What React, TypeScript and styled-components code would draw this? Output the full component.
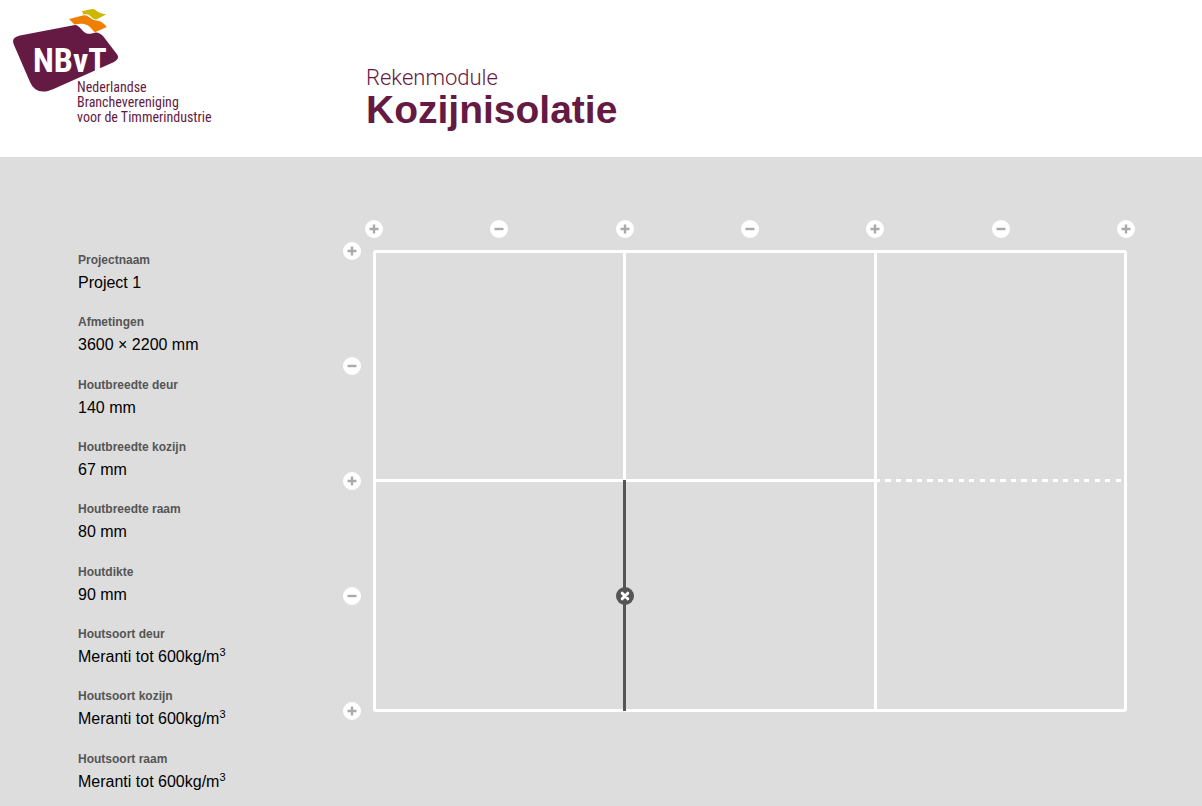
import React from "react";
import styled, { createGlobalStyle } from "styled-components";

const colors = {
  brand: "#651a43",
  surface: "#dddddd",
  line: "#ffffff",
  dark: "#555555",
  sign: "#aaaaaa",
};

const GlobalStyle = createGlobalStyle`
  * { box-sizing: border-box; }
  body {
    margin: 0;
    background: ${colors.surface};
    color: #000;
    font-family: "Liberation Sans", Arial, sans-serif;
  }
`;

const Header = styled.header`
  display: grid;
  grid-template-columns: 354px 1fr;
  height: 157px;
  padding: 8px 12px;
  background: #fff;
  color: ${colors.brand};
`;

const LogoLink = styled.a`
  display: block;
  width: 200px;
  color: inherit;
`;

const Title = styled.h1`
  display: flex;
  flex-direction: column;
  margin: 0;
  padding-top: 58px;
  font-size: 39px;
  line-height: 40px;
  font-weight: 700;
`;

const Overline = styled.span`
  font-family: Roboto, "Liberation Sans", sans-serif;
  font-size: 22px;
  line-height: 24px;
  font-weight: 300;
`;

const Main = styled.main`
  display: grid;
  grid-template-columns: 265px 1fr;
  padding: 63px 67px 0 78px;
`;

const Specs = styled.dl`
  display: grid;
  grid-auto-rows: 1fr;
  align-self: start;
  min-height: 561px;
  margin: 32px 0 0;
`;

const Term = styled.dt`
  color: ${colors.dark};
  font-size: 12px;
  line-height: 16px;
  font-weight: 700;
`;

const Value = styled.dd`
  margin: 5px 0 0;
  font-size: 16px;
  line-height: 20px;
`;

const Power = styled.sup`
  font-size: 11px;
  line-height: 0;
`;

const Editor = styled.section`
  display: grid;
  grid-template-columns: 18px 1fr;
  grid-template-rows: 18px auto;
  gap: 4px;
  align-self: start;
`;

const Handles = styled.div<{ $vertical?: boolean }>`
  display: flex;
  flex-direction: ${(p) => (p.$vertical ? "column" : "row")};
  justify-content: space-between;
  grid-column: ${(p) => (p.$vertical ? 1 : 2)};
  grid-row: ${(p) => (p.$vertical ? 2 : 1)};
`;

const RoundButton = styled.button<{ $dark?: boolean }>`
  display: block;
  flex: none;
  width: 18px;
  height: 18px;
  padding: 0;
  border: 0;
  border-radius: 50%;
  background: ${(p) => (p.$dark ? colors.dark : colors.line)};
  color: ${(p) => (p.$dark ? colors.line : colors.sign)};
  cursor: pointer;

  svg { display: block; }
`;

const Frame = styled.div`
  display: grid;
  grid-column: 2;
  grid-row: 2;
  grid-template-columns: 1fr 3px 1fr 3px 1fr;
  grid-template-rows: 1fr 3px 1fr;
  margin: 8px;
  aspect-ratio: 80 / 49;
  border: 3px solid ${colors.line};
  border-radius: 3px;
`;

const Bar = styled.div<{ $column: string; $row: string }>`
  grid-column: ${(p) => p.$column};
  grid-row: ${(p) => p.$row};
  background: ${colors.line};
`;

const DashedBar = styled(Bar)`
  margin: 0 -2px;
  background: repeating-linear-gradient(
    to right,
    ${colors.line} 0 calc(100% / 48),
    transparent calc(100% / 48) calc(100% / 24)
  );
`;

const ActiveBar = styled(Bar)`
  display: grid;
  place-content: center;
  margin: 1px 0 -2px;
  background: ${colors.dark};
`;

const specs = [
  ["Projectnaam", "Project 1"],
  ["Afmetingen", "3600 × 2200 mm"],
  ["Houtbreedte deur", "140 mm"],
  ["Houtbreedte kozijn", "67 mm"],
  ["Houtbreedte raam", "80 mm"],
  ["Houtdikte", "90 mm"],
  ["Houtsoort deur", "Meranti tot 600kg/m", "3"],
  ["Houtsoort kozijn", "Meranti tot 600kg/m", "3"],
  ["Houtsoort raam", "Meranti tot 600kg/m", "3"],
];

const signPaths = {
  plus: "M4.5 9h9M9 4.5v9",
  minus: "M4.5 9h9",
  cross: "M6.200 6.200l5.600 5.600M11.800 6.200l-5.600 5.600",
};

function Sign({ kind }: { kind: keyof typeof signPaths }) {
  return (
    <svg width="18" height="18" viewBox="0 0 18 18" aria-hidden="true">
      <path
        d={signPaths[kind]}
        stroke="currentColor"
        strokeWidth={kind === "cross" ? 3 : 2.4}
        strokeLinecap={kind === "cross" ? "round" : "butt"}
        fill="none"
      />
    </svg>
  );
}

function HandleList({ count, vertical }: { count: number; vertical?: boolean }) {
  const part = vertical ? "rij" : "kolom";
  return (
    <Handles $vertical={vertical}>
      {Array.from({ length: count }, (_, i) => {
        const add = i % 2 === 0;
        return (
          <RoundButton key={i} type="button" aria-label={`${part} ${add ? "toevoegen" : "verwijderen"}`}>
            <Sign kind={add ? "plus" : "minus"} />
          </RoundButton>
        );
      })}
    </Handles>
  );
}

function Logo() {
  return (
    <svg width="200" height="120" viewBox="12 8 200 120" fill={colors.brand}>
      <path d="M75 25L20 35.500Q10.500 37.500 14 45L30 82Q35 94 48 91Q53 89.500 58 87L114 62Q121 58 116 53L103 36Q99 32 95.500 32.500C92 33.500 88 35 84 32C80 28 79 25.500 75 25Z" />
      <path fill="#ee7f00" d="M69 19L83 15.500C88 14.500 90 19 94 20C97 21 101 19.500 106.800 27L95 32.300C92 30 91 27 87 25C83 23 79 23.500 74.500 24.500Z" />
      <path fill="#cdb700" d="M81.500 11.200L92 9C96 8.500 97 12.500 101 13.200Q103 13.500 106 14.500L96.300 19.500C92 19.500 91 15.500 88 14.600Q85.500 14 82.500 14.600Q84 13 81.500 11.200Z" />
      <g fontFamily='"Roboto Condensed", Roboto, sans-serif'>
        <text x="33" y="72" fontSize="34" fontWeight="700" fill="#fff">NBvT</text>
        <text x="77" y="92" fontSize="14">Nederlandse</text>
        <text x="77" y="107" fontSize="14">Branchevereniging</text>
        <text x="77" y="122" fontSize="14">voor de Timmerindustrie</text>
      </g>
    </svg>
  );
}

export default function App() {
  return (
    <>
      <GlobalStyle />
      <Header>
        <LogoLink href="#">
          <Logo />
        </LogoLink>
        <Title>
          <Overline>Rekenmodule</Overline>
          Kozijnisolatie
        </Title>
      </Header>
      <Main>
        <Specs>
          {specs.map(([term, value, power]) => (
            <div key={term}>
              <Term>{term}</Term>
              <Value>
                {value}
                {power && <Power>{power}</Power>}
              </Value>
            </div>
          ))}
        </Specs>
        <Editor aria-label="Kozijnindeling">
          <HandleList count={7} />
          <HandleList count={5} vertical />
          <Frame>
            <Bar $column="2" $row="1 / 3" />
            <Bar $column="4" $row="1 / 4" />
            <Bar $column="1 / 4" $row="2" />
            <DashedBar $column="5" $row="2" />
            <ActiveBar $column="2" $row="2 / 4">
              <RoundButton $dark type="button" aria-label="stijl verwijderen">
                <Sign kind="cross" />
              </RoundButton>
            </ActiveBar>
          </Frame>
        </Editor>
      </Main>
    </>
  );
}
